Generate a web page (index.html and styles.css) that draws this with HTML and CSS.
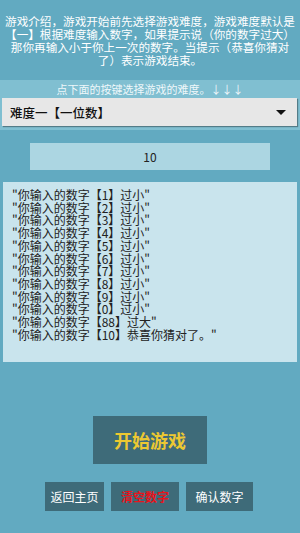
FILE: index.html
```html
<!DOCTYPE html>
<html lang="zh-CN">
<head>
<meta charset="utf-8">
<title>猜数字</title>
<link rel="stylesheet" href="styles.css">
</head>
<body>
<div class="intro">
  <span class="line">游戏介绍，游戏开始前先选择游戏难度，游戏难度默认是</span>
  <span class="line">【一】根据难度输入数字，如果提示说（你的数字过大）</span>
  <span class="line">那你再输入小于你上一次的数字。当提示（恭喜你猜对</span>
  <span class="line">了）表示游戏结束。</span>
</div>
<div class="select-section">
  <div class="hint">点下面的按键选择游戏的难度。↓↓↓</div>
  <div class="dropdown">
    <span class="dropdown-text">难度一【一位数】</span>
    <span class="caret"></span>
  </div>
</div>
<div class="number-input">10</div>
<div class="log">
  <div class="log-line">"你输入的数字【1】过小"</div>
  <div class="log-line">"你输入的数字【2】过小"</div>
  <div class="log-line">"你输入的数字【3】过小"</div>
  <div class="log-line">"你输入的数字【4】过小"</div>
  <div class="log-line">"你输入的数字【5】过小"</div>
  <div class="log-line">"你输入的数字【6】过小"</div>
  <div class="log-line">"你输入的数字【7】过小"</div>
  <div class="log-line">"你输入的数字【8】过小"</div>
  <div class="log-line">"你输入的数字【9】过小"</div>
  <div class="log-line">"你输入的数字【0】过小"</div>
  <div class="log-line">"你输入的数字【88】过大"</div>
  <div class="log-line">"你输入的数字【10】恭喜你猜对了。"</div>
</div>
<div class="start-row">
  <div class="start-btn">开始游戏</div>
</div>
<div class="btn-row">
  <div class="btn btn-back">返回主页</div>
  <div class="btn btn-clear">清空数字</div>
  <div class="btn btn-confirm">确认数字</div>
</div>
</body>
</html>
```
FILE: styles.css
```css
html, body {
  margin: 0;
  padding: 0;
}
body {
  width: 300px;
  height: 533px;
  overflow: hidden;
  background: #62aac1;
  font-family: "Noto Sans CJK SC", "Noto Sans", sans-serif;
}
.intro {
  padding-top: 15px;
  color: #ffffff;
  font-size: 11.6px;
  line-height: 13px;
  text-align: center;
}
.intro .line {
  display: block;
  white-space: nowrap;
}
.select-section {
  margin-top: 13px;
  background: #80bfd1;
  padding-bottom: 4px;
}
.hint {
  height: 18px;
  line-height: 18px;
  font-size: 11px;
  color: #eef7fa;
  text-align: center;
}
.dropdown {
  margin: 0 3px 0 2px;
  height: 28px;
  background: #e7e7e7;
  box-shadow: 1px 1px 1px rgba(0,0,0,0.35);
  display: flex;
  align-items: center;
  justify-content: space-between;
  padding: 0 11px 0 8px;
  box-sizing: border-box;
}
.dropdown-text {
  font-size: 12.5px;
  font-weight: 500;
  color: #111;
}
.caret {
  width: 0;
  height: 0;
  border-left: 5px solid transparent;
  border-right: 5px solid transparent;
  border-top: 5px solid #111;
}
.number-input {
  margin: 13px 30px 0 30px;
  height: 27px;
  line-height: 27px;
  background: #acd6e2;
  text-align: center;
  font-size: 12px;
  color: #222;
}
.log {
  margin: 12px 3px 0 3px;
  height: 180px;
  box-sizing: border-box;
  padding: 7px 0 0 9px;
  background: #c9e4ed;
  font-size: 12px;
  line-height: 12.7px;
  color: #222;
}
.log-line {
  white-space: nowrap;
}
.start-row {
  margin-top: 54px;
  display: flex;
  justify-content: center;
}
.start-btn {
  width: 114px;
  height: 48px;
  background: #3e6b79;
  color: #ecc832;
  font-size: 18px;
  font-weight: bold;
  display: flex;
  align-items: center;
  justify-content: center;
}
.btn-row {
  margin-top: 18px;
  display: flex;
  justify-content: center;
  gap: 7px;
  padding-right: 2px;
}
.btn {
  height: 29px;
  background: #3e6b79;
  color: #ffffff;
  font-size: 12px;
  display: flex;
  align-items: center;
  justify-content: center;
}
.btn-back {
  width: 59px;
}
.btn-clear {
  width: 68px;
  color: #e8141c;
  font-weight: bold;
}
.btn-confirm {
  width: 67px;
}
```
